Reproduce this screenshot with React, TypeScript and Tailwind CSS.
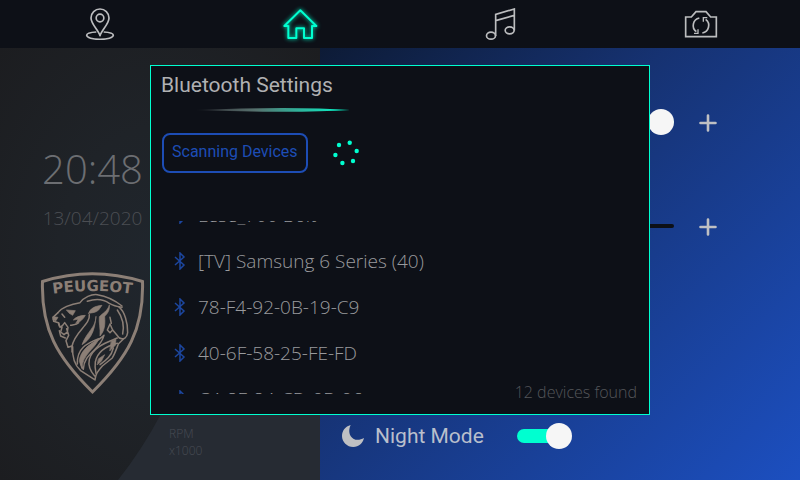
import { useLayoutEffect, useRef } from "react";

const devices = [
  "Lese_700 Bolt",
  "[TV] Samsung 6 Series (40)",
  "78-F4-92-0B-19-C9",
  "40-6F-58-25-FE-FD",
  "C4-8F-84-CD-0B-06",
];

const lightFont = "font-['Open_Sans',sans-serif] font-light";
const uiFont = "font-['Roboto',sans-serif]";

function PinIcon() {
  return (
    <svg viewBox="0 0 96 96" className="size-8" fill="none" stroke="currentColor" strokeWidth="5">
      <circle cx="48" cy="30" r="11.5" />
      <path d="M48 83C43 66 21 48 21 30a27 27 0 0 1 54 0C75 48 53 66 48 83Z" strokeLinejoin="round" />
      <path d="M37 72C20 73 8 77 8 82c0 7 18 12 40 12s40-5 40-12c0-5-12-9-29-10" />
    </svg>
  );
}

function HomeIcon() {
  return (
    <svg
      viewBox="0 0 96 96"
      className="size-8 overflow-visible text-[#00ffd0] drop-shadow-[0_0_2px_#00ffd0]"
      fill="none"
      stroke="currentColor"
      strokeWidth="6"
    >
      <path d="M13 54H1L49 7l48 47H84v36H60V61H37v29H13V52" strokeLinejoin="round" />
    </svg>
  );
}

function MusicIcon() {
  return (
    <svg viewBox="0 0 96 96" className="size-8" fill="none" stroke="currentColor" strokeWidth="5">
      <ellipse cx="21" cy="83" rx="13.5" ry="10.5" />
      <ellipse cx="77" cy="67" rx="13.5" ry="10.5" />
      <path d="M35 84V19l56-16v64M35 38l56-16" />
    </svg>
  );
}

function CameraIcon() {
  return (
    <svg viewBox="0 0 96 96" className="size-8 overflow-visible" fill="none" stroke="currentColor" strokeWidth="5">
      <path d="M5 27h17l14-16h30l14 16h17v59H5Z" />
      <path d="M46 30A23 23 0 0 0 37 71M55 75A23 23 0 0 0 65 34" />
      <path d="M30 76h12V64M70 29H58v12" strokeWidth="4" />
    </svg>
  );
}

function BluetoothIcon() {
  return (
    <svg viewBox="0 0 12 18" className="h-[18px] w-3 shrink-0 text-[#1c469f]" fill="none" stroke="currentColor" strokeWidth="1.5">
      <path d="M1 5l9 8-4 4V1l4 4-9 8" />
    </svg>
  );
}

function PlusIcon() {
  return (
    <svg viewBox="0 0 18 18" className="size-[18px]" stroke="currentColor" strokeWidth="2.6" strokeLinecap="round">
      <path d="M9 1.5v15M1.5 9h15" />
    </svg>
  );
}

function MoonIcon() {
  return (
    <svg viewBox="0 0 66 66" className="size-[22px] text-[#bfc0c3]" fill="currentColor">
      <path d="M26 0C18 17 22 33 34 41c10 6 21 4 32-2C62 55 50 66 34 66 15 66 0 51 0 33 0 17 10 4 26 0Z" />
    </svg>
  );
}

function Spinner() {
  return (
    <svg viewBox="0 0 28 28" className="size-7 text-[#00ffd0]" fill="currentColor" role="status">
      <circle cx="7" cy="6" r="2.2" />
      <circle cx="17.7" cy="3.8" r="2.2" />
      <circle cx="24.7" cy="12" r="2.2" />
      <circle cx="21" cy="22" r="2.2" />
      <circle cx="10.4" cy="24" r="2.2" />
      <circle cx="3.4" cy="16" r="2.2" />
    </svg>
  );
}

function ShieldLogo() {
  return (
    <svg viewBox="0 0 105 124" className="h-[124px] w-[105px] text-[#8c7f76]" fill="none" stroke="currentColor">
      <path d="M2.5 10.5Q52-5 102.5 10.5C104 58 88 86 52.5 121 17 86 1 58 2.5 10.5Z" strokeWidth="3" />
      <path id="crest" d="M5 24Q52 16 100 24" stroke="none" />
      <text className="font-['DejaVu_Sans',sans-serif] text-[15px] font-bold" fill="currentColor" stroke="none" textAnchor="middle">
        <textPath href="#crest" startOffset="50%">PEUGEOT</textPath>
      </text>
      <g transform="scale(.3333) translate(-30 -33)" strokeWidth="4.5" strokeLinejoin="round" strokeLinecap="round">
        {/* brow, crown and back of the mane */}
        <path d="M84 158c10-14 38-26 66-30 12-16 34-26 52-24 26 4 52 16 74 34" />
        <path d="M172 124c24-8 46-8 66 6 14 8 26 10 38 12" />
        <path d="M266 140c18 14 28 50 27 78-2 16-12 22-24 16M262 150c14 20 22 44 16 72" />
        {/* muzzle, open mouth and chin */}
        <path d="M84 158l-15 14 2 12 14 4 3 10M88 212l4 16 14 6" />
        <path d="M86 188l4 14 8-6 6-8 10 14-2 14-10 8-10-8 4-14M110 206l6 20-8 16 6 20 12-4v18" />
        <path d="M70 170l14 2-6 10-8-2ZM110 150l26 2-8 14-10-6ZM138 190c10-2 22-12 28-24-16 0-30 6-36 14l14-2Z" fill="currentColor" strokeWidth="2" />
        <path d="M122 196c10-2 18-2 24-8M96 162l8 10" />
        {/* locks behind the cheek */}
        <path d="M176 160c4-14 18-22 40-24l-10 14c-8 8-18 8-30 10Z" fill="currentColor" strokeWidth="2" />
        <path d="M178 164c4 30-46 52-52 96" />
        <path d="M238 136c2 16-6 24-14 34 2 24 0 42-14 58 2-22-4-40-2-58 10-10 24-16 30-34Z" fill="currentColor" strokeWidth="2" />
        <path d="M198 170c-2 36-26 42-42 84 22-14 38-34 42-84Z" fill="currentColor" strokeWidth="2" />
        <path d="M240 192l-8 18 8 8 8-8ZM244 190l-4-18M250 212l18 22" />
        {/* sweeping lower mane */}
        <path d="M128 260c-2 34 6 56 24 72l43 28c2-18 8-26 22-42l30-24c8-14 12-26 18-42l16-16" />
        <path d="M206 236c-36 14-66 30-64 76M222 226c-28 26-60 30-68 68-4 14 0 26 6 34 2-50 50-56 62-102Z" />
        <path d="M206 238c-32 18-56 36-58 66l8 22c2-44 36-56 50-88Z" fill="currentColor" strokeWidth="2" />
        <path d="M262 234c-28 12-74 26-84 64-4 18 2 34 16 50" />
        <path d="M262 250c-32 8-60 26-66 56-2 12 0 24 2 34M250 264c-6 24-20 36-40 50" />
        <path d="M244 244l14-6-2 18-16 16ZM206 296l18-12-10 20-12 10Z" fill="currentColor" strokeWidth="2" />
      </g>
    </svg>
  );
}

const sliderClass =
  "h-[26px] w-[274px] appearance-none bg-transparent " +
  "[&::-webkit-slider-runnable-track]:h-1 [&::-webkit-slider-runnable-track]:rounded-full " +
  "[&::-webkit-slider-thumb]:-mt-[11px] [&::-webkit-slider-thumb]:size-[26px] [&::-webkit-slider-thumb]:appearance-none " +
  "[&::-webkit-slider-thumb]:rounded-full [&::-webkit-slider-thumb]:bg-[#f6f6f6]";

function SliderRow({ label, value, track }: { label: string; value: number; track: string }) {
  return (
    <div className="flex h-10 items-center pl-20">
      <input type="range" aria-label={label} defaultValue={value} className={`${sliderClass} ${track}`} />
      <button type="button" aria-label={`${label} up`} className="ml-[25px] pt-0.5 text-[#bfc0c3]">
        <PlusIcon />
      </button>
    </div>
  );
}

function BluetoothDialog() {
  const list = useRef<HTMLUListElement>(null);
  useLayoutEffect(() => {
    if (list.current) list.current.scrollTop = 29;
  }, []);

  return (
    <div className="fixed inset-0 flex items-center justify-center">
      <section
        role="dialog"
        aria-labelledby="bt-title"
        className="flex h-[350px] w-[500px] flex-col border border-[#00ffd0] bg-[#0d1017] px-2.5 pt-[3px]"
      >
        <h1 id="bt-title" className={`${uiFont} text-[21px] leading-8 text-[#b0b1b3]`}>
          Bluetooth Settings
        </h1>
        <svg viewBox="0 0 156 4" className="mt-[7px] ml-[33px] h-1 w-[156px]">
          <defs>
            <linearGradient id="streak">
              <stop offset="0" stopColor="#8a8f90" stopOpacity="0" />
              <stop offset=".4" stopColor="#56736f" />
              <stop offset="1" stopColor="#00ffd0" />
            </linearGradient>
          </defs>
          <path d="M0 2Q100-2 156 2 100 5.500 0 2Z" fill="url(#streak)" />
        </svg>
        <div className="mt-[21px] flex items-center gap-6 pl-px">
          <button
            type="button"
            className={`${uiFont} h-10 rounded-lg border-2 border-[#1d4db5] px-2 pb-0.5 text-base text-[#1d4db5]`}
          >
            Scanning Devices
          </button>
          <Spinner />
        </div>
        <ul ref={list} className="mt-12 h-[173px] overflow-y-scroll pl-[13px] [scrollbar-width:none]">
          {devices.map((name) => (
            <li key={name} className={`${lightFont} flex h-[46px] items-center gap-3 text-[19px] text-[#999a9d]`}>
              <BluetoothIcon />
              {name}
            </li>
          ))}
        </ul>
        <p className={`${lightFont} -mt-3.5 pr-0.5 text-right text-base leading-6 text-[#54565a]`}>12 devices found</p>
      </section>
    </div>
  );
}

export default function App() {
  return (
    <div className="flex min-h-screen flex-col bg-[#0d1017]">
      <nav className="grid h-12 grid-cols-4 text-[#bcbdbf]">
        <button type="button" aria-label="Navigation" className="flex items-center justify-center">
          <PinIcon />
        </button>
        <button type="button" aria-label="Home" className="flex items-center justify-center">
          <HomeIcon />
        </button>
        <button type="button" aria-label="Music" className="flex items-center justify-center">
          <MusicIcon />
        </button>
        <button type="button" aria-label="Camera" className="flex items-center justify-center">
          <CameraIcon />
        </button>
      </nav>
      <main className="grid flex-1 grid-cols-[2fr_3fr]">
        <section className="relative bg-[radial-gradient(ellipse_at_center,#20262d_0%,#1f2328_45%,#1c1d20_100%)]">
          <svg viewBox="0 0 320 432" preserveAspectRatio="none" className="absolute inset-0 size-full">
            <path d="M162 364Q142 402 118 432H320V364Z" fill="#262b33" />
          </svg>
          <div className="relative flex w-[185px] flex-col items-center pt-[94px]">
            <time className={`${lightFont} text-[40px] leading-[54px] text-[#6c6e72]`}>20:48</time>
            <time className={`${lightFont} mt-2 text-[19px] leading-7 text-[#4b4e53]`}>13/04/2020</time>
            <div className="mt-[39px]">
              <ShieldLogo />
            </div>
          </div>
          <p className={`${lightFont} relative mt-[30px] pl-[169px] text-xs leading-[17px] text-[#484c53]`}>
            RPM
            <br />
            x1000
          </p>
        </section>
        <section className="flex flex-col gap-16 bg-[linear-gradient(135deg,#0d1b36_0%,#163272_38%,#1c4fc0_100%)] pt-[54px]">
          <SliderRow label="Volume" value={100} track="[&::-webkit-slider-runnable-track]:bg-[#00ffd0]" />
          <SliderRow label="Brightness" value={20} track="[&::-webkit-slider-runnable-track]:bg-[#0d1017]" />
          <div className="mt-[106px] flex h-10 items-center pl-[22px]">
            <MoonIcon />
            <label htmlFor="night" className={`${uiFont} ml-[11px] w-[142px] text-[21px] leading-8 text-[#b9bfcc]`}>
              Night Mode
            </label>
            <input
              id="night"
              type="checkbox"
              defaultChecked
              className="flex h-[26px] w-[55px] appearance-none items-center before:h-3.5 before:flex-1 before:rounded-full before:bg-[#00ffd0] after:-ml-[13px] after:size-[26px] after:rounded-full after:bg-[#f6f6f6]"
            />
          </div>
        </section>
      </main>
      <BluetoothDialog />
    </div>
  );
}
